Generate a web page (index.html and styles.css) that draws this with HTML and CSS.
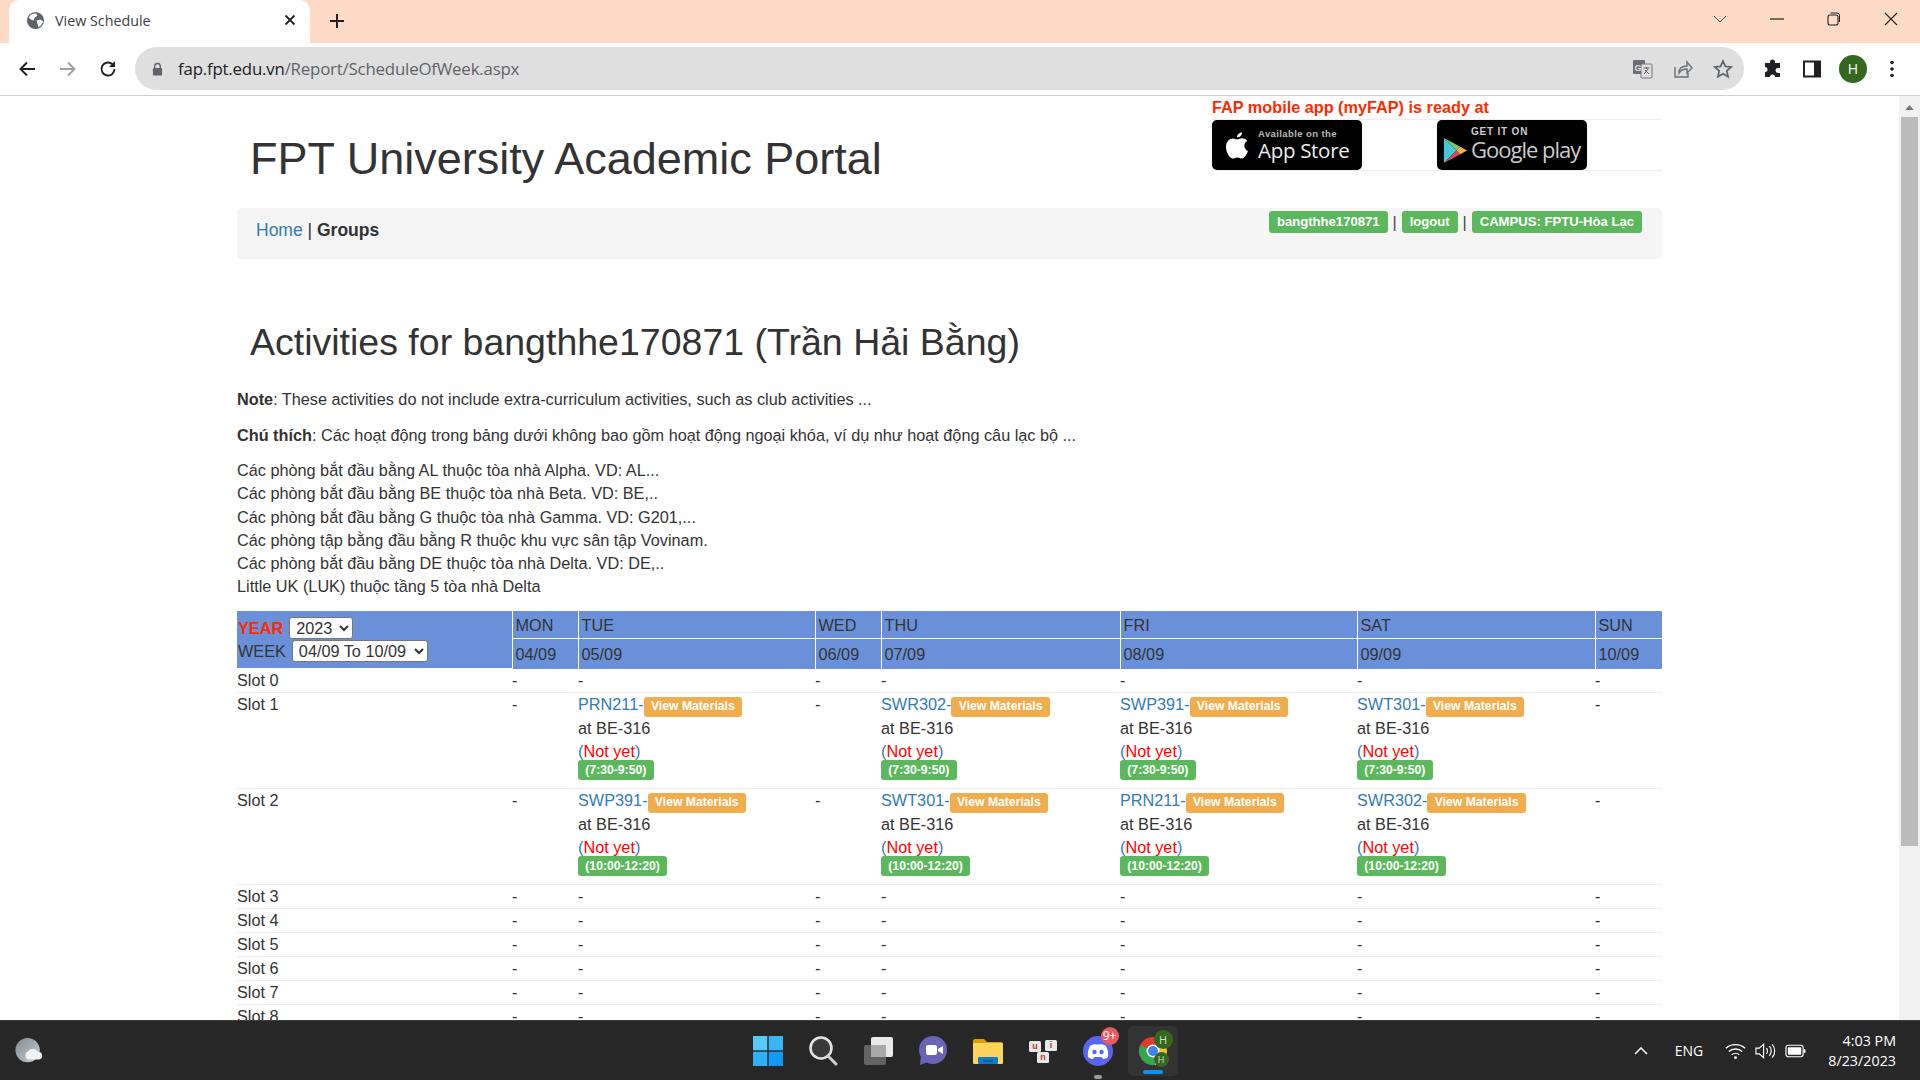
FILE: index.html
```html
<!DOCTYPE html>
<html lang="en">
<head>
    <meta charset="UTF-8">
    <meta name="viewport" content="width=device-width, initial-scale=1.0">
    <title>View Schedule</title>
    <link rel="stylesheet" href="styles.css">
</head>
<body>
    <!-- Browser tabs -->
    <div class="tabstrip">
        <div class="tab">
            <svg class="tab-favicon" viewBox="0 0 20 20"><circle cx="10" cy="10" r="9" fill="#5f6368"/><path d="M4 5c2-2 5-3 7-2l1 2-3 2-1 3-3-1-2-2zM11 10l4-1 3 2-2 4-3 2-1-4z" fill="#fff"/></svg>
            <span class="tab-title">View Schedule</span>
            <svg class="tab-close" viewBox="0 0 12 12"><path d="M1.5 1.5l9 9M10.5 1.5l-9 9" stroke="#202124" stroke-width="1.8"/></svg>
        </div>
        <svg class="tab-new" viewBox="0 0 16 16"><path d="M8 1v14M1 8h14" stroke="#202124" stroke-width="2"/></svg>
        <div class="window-buttons">
            <svg viewBox="0 0 14 14"><path d="M1 4l6 6 6-6" fill="none" stroke="#444" stroke-width="1"/></svg>
            <svg viewBox="0 0 14 14"><path d="M0 7h14" stroke="#222" stroke-width="1.2"/></svg>
            <svg viewBox="0 0 14 14"><rect x="1" y="3" width="10" height="10" rx="2" fill="none" stroke="#222" stroke-width="1.1"/><path d="M3.500 1h6.500a2.500 2.500 0 0 1 2.500 2.500v6.500" fill="none" stroke="#222" stroke-width="1"/></svg>
            <svg viewBox="0 0 14 14"><path d="M1 1l12 12M13 1l-12 12" stroke="#222" stroke-width="1.1"/></svg>
        </div>
    </div>

    <!-- Browser toolbar -->
    <div class="toolbar">
        <div class="nav-buttons">
            <svg viewBox="0 0 18 18"><path d="M17 9H3M9 2.500L2.500 9 9 15.500" fill="none" stroke="#202124" stroke-width="1.9"/></svg>
            <svg viewBox="0 0 18 18"><path d="M1 9h14M9 2.500L15.500 9 9 15.500" fill="none" stroke="#9aa0a6" stroke-width="1.9"/></svg>
            <svg viewBox="0 0 18 18"><path d="M15.500 9a6.500 6.500 0 1 1-2-4.700" fill="none" stroke="#202124" stroke-width="1.9"/><path d="M16 1v6h-6z" fill="#202124"/></svg>
        </div>
        <div class="omnibox">
            <svg class="lock" viewBox="0 0 12 14"><path d="M3 6V4a3 3 0 0 1 6 0v2" fill="none" stroke="#5f6368" stroke-width="1.500"/><rect x="1" y="6" width="10" height="8" rx="1" fill="#5f6368"/></svg>
            <span class="url"><span class="url-host">fap.fpt.edu.vn</span>/Report/ScheduleOfWeek.aspx</span>
            <div class="omni-icons">
                <svg viewBox="0 0 20 20"><rect x="0" y="1" width="12" height="14" rx="1" fill="#6b6f73"/><rect x="8" y="5" width="11" height="14" rx="1" fill="#dfdfdf" stroke="#777"/><text x="5" y="11.500" class="translate-g">G</text><path d="M10.500 9h6M13.500 8v2M11 15l4-5M12 11l4 4" stroke="#666" fill="none"/></svg>
                <svg viewBox="0 0 20 20"><path d="M2 8v10h13v-4" fill="none" stroke="#6b6f73" stroke-width="1.400"/><path d="M6 14c0-5 3-7 8-7V3l5 6-5 5v-4c-3 0-6 1-8 4z" fill="none" stroke="#6b6f73" stroke-width="1.400"/></svg>
                <svg viewBox="0 0 20 20"><path d="M10 2l2.400 5.400 5.800.6-4.400 3.900 1.300 5.800L10 14.700l-5.100 3 1.300-5.800L1.800 8l5.800-.6z" fill="none" stroke="#5f6368" stroke-width="1.700"/></svg>
            </div>
        </div>
        <div class="toolbar-icons">
            <svg viewBox="0 0 20 20"><path d="M7 3a2.500 2.500 0 0 1 5 0v1h5v5h-2a2.500 2.500 0 0 0 0 5h2v4h-5a2.500 2.500 0 0 0-5 0H2v-5a2.500 2.500 0 0 0 0-5V4h5z" fill="#202124"/></svg>
            <svg viewBox="0 0 20 20"><rect x="2" y="2.500" width="16" height="15" fill="none" stroke="#202124" stroke-width="2"/><rect x="12" y="2.500" width="6" height="15" fill="#202124"/></svg>
            <span class="avatar">H</span>
            <svg viewBox="0 0 20 20"><circle cx="10" cy="3.500" r="1.800" fill="#202124"/><circle cx="10" cy="10" r="1.800" fill="#202124"/><circle cx="10" cy="16.500" r="1.800" fill="#202124"/></svg>
        </div>
    </div>

    <div class="viewport">
        <div class="page">
            <div class="container">
                <div class="page-header">
                    <h1 class="portal-title">FPT University Academic Portal</h1>
                    <div class="mobile-apps">
                        <div class="mobile-title">FAP mobile app (myFAP) is ready at</div>
                        <div class="store-row">
                            <div class="store-badge">
                                <svg class="apple" viewBox="0 0 24 28"><path d="M17 1c.2 2-1.700 5-5 5-.2-2.500 2-5 5-5zM12 8c1.500 0 3-1.200 5.200-1.200 2 0 3.900 1 5 2.700-4.200 2.400-3.500 8.400.8 10-1.300 3.500-3.700 7.500-6 7.500-1.700 0-2.600-1.100-4.500-1.100s-3 1.100-4.500 1.100C4.500 27 1 20.500 1 15.500 1 10 4.500 7 7.800 7 9.500 7 11 8 12 8z" fill="#fff"/></svg>
                                <div class="store-text app-text">
                                    <span class="store-small">Available on the</span>
                                    <span class="store-big">App Store</span>
                                </div>
                            </div>
                            <div class="store-badge play-badge">
                                <svg class="play" viewBox="0 0 26 28"><path d="M1 1l13 13L1 27z" fill="#45c8d8"/><path d="M1 1l17 9-4 4z" fill="#7cc576"/><path d="M1 27l17-9-4-4z" fill="#d8476b"/><path d="M18 10l7 4-7 4-4-4z" fill="#f7b53c"/></svg>
                                <div class="store-text">
                                    <span class="store-get">GET IT ON</span>
                                    <span class="store-google">Google play</span>
                                </div>
                            </div>
                        </div>
                    </div>
                </div>

                <div class="nav-well">
                    <div class="crumbs"><a href="#">Home</a> | <b>Groups</b></div>
                    <div class="user-info">
                        <span class="label label-green">bangthhe170871</span>
                        <span class="user-sep">|</span>
                        <span class="label label-green">logout</span>
                        <span class="user-sep">|</span>
                        <span class="label label-green">CAMPUS: FPTU-Hòa Lạc</span>
                    </div>
                </div>

                <h2 class="activities-title">Activities for bangthhe170871 (Trần Hải Bằng)</h2>

                <p class="note"><b>Note</b>: These activities do not include extra-curriculum activities, such as club activities ...</p>
                <p class="note"><b>Chú thích</b>: Các hoạt động trong bảng dưới không bao gồm hoạt động ngoại khóa, ví dụ như hoạt động câu lạc bộ ...</p>
                <div class="rooms">
                    Các phòng bắt đầu bằng AL thuộc tòa nhà Alpha. VD: AL...<br>
                    Các phòng bắt đầu bằng BE thuộc tòa nhà Beta. VD: BE,..<br>
                    Các phòng bắt đầu bằng G thuộc tòa nhà Gamma. VD: G201,...<br>
                    Các phòng tập bằng đầu bằng R thuộc khu vực sân tập Vovinam.<br>
                    Các phòng bắt đầu bằng DE thuộc tòa nhà Delta. VD: DE,..<br>
                    Little UK (LUK) thuộc tầng 5 tòa nhà Delta
                </div>

                <table class="schedule">
                    <colgroup>
                        <col class="col-slot"><col class="col-mon"><col class="col-tue"><col class="col-wed"><col class="col-thu"><col class="col-fri"><col class="col-sat"><col class="col-sun">
                    </colgroup>
                    <thead>
                        <tr class="head-days">
                            <th rowspan="2" class="head-picker">
                                <div class="picker-row">
                                    <span class="year-label">YEAR</span>
                                    <select class="year-select"><option>2023</option></select>
                                </div>
                                <div class="picker-row">
                                    <span>WEEK</span>
                                    <select class="week-select"><option>04/09 To 10/09</option></select>
                                </div>
                            </th>
                            <th>MON</th><th>TUE</th><th>WED</th><th>THU</th><th>FRI</th><th>SAT</th><th>SUN</th>
                        </tr>
                        <tr class="head-dates">
                            <th>04/09</th><th>05/09</th><th>06/09</th><th>07/09</th><th>08/09</th><th>09/09</th><th>10/09</th>
                        </tr>
                    </thead>
                    <tbody>
                        <tr><td>Slot 0</td><td>-</td><td>-</td><td>-</td><td>-</td><td>-</td><td>-</td><td>-</td></tr>
                        <tr>
                            <td>Slot 1</td><td>-</td>
                            <td><div class="activity"><div><a href="#">PRN211-</a><span class="label label-orange">View Materials</span></div><div>at BE-316</div><div class="status"><a href="#">(<span class="not-yet">Not yet</span>)</a></div><span class="label label-green">(7:30-9:50)</span></div></td>
                            <td>-</td>
                            <td><div class="activity"><div><a href="#">SWR302-</a><span class="label label-orange">View Materials</span></div><div>at BE-316</div><div class="status"><a href="#">(<span class="not-yet">Not yet</span>)</a></div><span class="label label-green">(7:30-9:50)</span></div></td>
                            <td><div class="activity"><div><a href="#">SWP391-</a><span class="label label-orange">View Materials</span></div><div>at BE-316</div><div class="status"><a href="#">(<span class="not-yet">Not yet</span>)</a></div><span class="label label-green">(7:30-9:50)</span></div></td>
                            <td><div class="activity"><div><a href="#">SWT301-</a><span class="label label-orange">View Materials</span></div><div>at BE-316</div><div class="status"><a href="#">(<span class="not-yet">Not yet</span>)</a></div><span class="label label-green">(7:30-9:50)</span></div></td>
                            <td>-</td>
                        </tr>
                        <tr>
                            <td>Slot 2</td><td>-</td>
                            <td><div class="activity"><div><a href="#">SWP391-</a><span class="label label-orange">View Materials</span></div><div>at BE-316</div><div class="status"><a href="#">(<span class="not-yet">Not yet</span>)</a></div><span class="label label-green">(10:00-12:20)</span></div></td>
                            <td>-</td>
                            <td><div class="activity"><div><a href="#">SWT301-</a><span class="label label-orange">View Materials</span></div><div>at BE-316</div><div class="status"><a href="#">(<span class="not-yet">Not yet</span>)</a></div><span class="label label-green">(10:00-12:20)</span></div></td>
                            <td><div class="activity"><div><a href="#">PRN211-</a><span class="label label-orange">View Materials</span></div><div>at BE-316</div><div class="status"><a href="#">(<span class="not-yet">Not yet</span>)</a></div><span class="label label-green">(10:00-12:20)</span></div></td>
                            <td><div class="activity"><div><a href="#">SWR302-</a><span class="label label-orange">View Materials</span></div><div>at BE-316</div><div class="status"><a href="#">(<span class="not-yet">Not yet</span>)</a></div><span class="label label-green">(10:00-12:20)</span></div></td>
                            <td>-</td>
                        </tr>
                        <tr><td>Slot 3</td><td>-</td><td>-</td><td>-</td><td>-</td><td>-</td><td>-</td><td>-</td></tr>
                        <tr><td>Slot 4</td><td>-</td><td>-</td><td>-</td><td>-</td><td>-</td><td>-</td><td>-</td></tr>
                        <tr><td>Slot 5</td><td>-</td><td>-</td><td>-</td><td>-</td><td>-</td><td>-</td><td>-</td></tr>
                        <tr><td>Slot 6</td><td>-</td><td>-</td><td>-</td><td>-</td><td>-</td><td>-</td><td>-</td></tr>
                        <tr><td>Slot 7</td><td>-</td><td>-</td><td>-</td><td>-</td><td>-</td><td>-</td><td>-</td></tr>
                        <tr><td>Slot 8</td><td>-</td><td>-</td><td>-</td><td>-</td><td>-</td><td>-</td><td>-</td></tr>
                    </tbody>
                </table>
            </div>
        </div>
        <div class="scrollbar">
            <svg class="scroll-up" viewBox="0 0 10 6"><path d="M5 0l5 6H0z" fill="#777"/></svg>
            <div class="scroll-thumb"></div>
        </div>
    </div>

    <!-- Windows taskbar -->
    <div class="taskbar">
        <div class="task-left">
            <svg class="weather" viewBox="0 0 30 32"><defs><linearGradient id="moon" x1="0" y1="0" x2="1" y2="1"><stop offset="0" stop-color="#7f8a94"/><stop offset="1" stop-color="#c9ced2"/></linearGradient></defs><circle cx="13" cy="15" r="13" fill="url(#moon)"/><path d="M13 25a5 5 0 0 1 1-9 6 6 0 0 1 10 1 4 4 0 0 1 1 8z" fill="#f1f2f3"/></svg>
        </div>
        <div class="task-apps">
            <svg class="task-icon" viewBox="0 0 30 30"><rect x="0" y="0" width="14.300" height="14.300" fill="#58c8f5"/><rect x="15.700" y="0" width="14.300" height="14.300" fill="#3cb4f3"/><rect x="0" y="15.700" width="14.300" height="14.300" fill="#2fb0f2"/><rect x="15.700" y="15.700" width="14.300" height="14.300" fill="#139af0"/></svg>
            <svg class="task-icon" viewBox="0 0 30 30"><circle cx="13" cy="12" r="10.500" fill="#3a3a3a" stroke="#e4e4e4" stroke-width="2.600"/><path d="M20 20l8 8" stroke="#d0d0d0" stroke-width="3" stroke-linecap="round"/></svg>
            <svg class="task-icon" viewBox="0 0 30 30"><rect x="1" y="9" width="22" height="20" rx="2" fill="#636363"/><rect x="8" y="1" width="22" height="20" rx="2" fill="#e9e9e9"/><rect x="8" y="9" width="15" height="12" fill="#a9a9a9"/></svg>
            <svg class="task-icon" viewBox="0 0 30 30"><circle cx="15" cy="14" r="14" fill="#6a63b8"/><path d="M3 20l-1 9 8-3z" fill="#6a63b8"/><rect x="8" y="9" width="11" height="10" rx="2" fill="#fff"/><path d="M20 13l5-3v8l-5-3z" fill="#fff"/></svg>
            <svg class="task-icon" viewBox="0 0 30 30"><path d="M0 5a2 2 0 0 1 2-2h9l3 3h14a2 2 0 0 1 2 2v4H0z" fill="#d9a000"/><rect x="0" y="7" width="30" height="21" rx="1" fill="#fcd35c"/><rect x="5" y="21" width="20" height="7" rx="1" fill="#0e78c9"/><path d="M10 25h10" stroke="#064f8a" stroke-width="1.200"/></svg>
            <svg class="task-icon" viewBox="0 0 30 30"><rect x="1" y="5" width="12" height="11" rx="1.500" fill="#e8e8e8"/><rect x="17" y="4" width="12" height="11" rx="1.500" fill="#e8e8e8"/><rect x="9" y="16" width="12" height="11" rx="1.500" fill="#e8e8e8"/><text x="7" y="13" class="key-text">u</text><text x="23" y="12" class="key-text">i</text><text x="15" y="24" class="key-text">n</text></svg>
            <div class="discord">
                <svg class="task-icon" viewBox="0 0 30 30"><circle cx="15" cy="15" r="15" fill="#5865f2"/><path d="M7 10c3-2 5-2 6-1.500h4c1-.5 3-.5 6 1.500 2 4 2.500 7 2 11-2 1.500-3.500 2-5 2l-1.500-2h-7L10 23c-1.500 0-3-.5-5-2-.5-4 0-7 2-11z" fill="#fff"/><circle cx="11.500" cy="16" r="2.200" fill="#5865f2"/><circle cx="18.500" cy="16" r="2.200" fill="#5865f2"/></svg>
                <span class="discord-badge">9+</span>
                <span class="running-dot"></span>
            </div>
            <div class="chrome-active">
                <svg class="task-icon" viewBox="0 0 30 30"><circle cx="15" cy="15" r="14" fill="#e33b2e"/><path d="M15 15L27 8a14 14 0 0 1-10 21z" fill="#f9c21a"/><path d="M15 15l2 14A14 14 0 0 1 2.500 9z" fill="#2fa84f"/><circle cx="15" cy="15" r="6.500" fill="#fff"/><circle cx="15" cy="15" r="5" fill="#3f84ee"/></svg>
                <span class="chrome-h chrome-h-big">H</span>
                <span class="chrome-h chrome-h-small">H</span>
                <span class="running-bar"></span>
            </div>
        </div>
        <div class="task-tray">
            <svg class="tray-chevron" viewBox="0 0 14 8"><path d="M1 7l6-6 6 6" fill="none" stroke="#fff" stroke-width="1.600"/></svg>
            <span class="tray-lang">ENG</span>
            <svg class="tray-icon" viewBox="0 0 22 18"><path d="M1 6c5.500-5 14.500-5 20 0M4 9.500c4-3.500 10-3.500 14 0M7 13c2.300-2 5.700-2 8 0" fill="none" stroke="#fff" stroke-width="1.400"/><circle cx="11" cy="16" r="1.500" fill="#fff"/></svg>
            <svg class="tray-icon" viewBox="0 0 22 18"><path d="M1 6h3.500L9 2v14l-4.500-4H1z" fill="none" stroke="#fff" stroke-width="1.200"/><path d="M12 6c1.500 2 1.500 4 0 6M15 4c2.500 3 2.500 7 0 10M18 2c3.500 4 3.500 10 0 14" fill="none" stroke="#fff" stroke-width="1.200"/></svg>
            <svg class="tray-icon" viewBox="0 0 22 18"><rect x="1" y="3" width="18" height="12" rx="2.500" fill="none" stroke="#fff" stroke-width="1.200"/><rect x="3" y="5" width="14" height="8" rx="1" fill="#fff"/><rect x="19.500" y="7" width="2" height="4" rx="1" fill="#fff"/></svg>
            <div class="tray-clock"><span>4:03 PM</span><span>8/23/2023</span></div>
        </div>
    </div>
</body>
</html>
```

FILE: styles.css
```css
* {
    box-sizing: border-box;
}
html, body {
    margin: 0;
    height: 100%;
    overflow: hidden;
}
body {
    display: flex;
    flex-direction: column;
    height: 1080px;
    font-family: "Liberation Sans", Arial, sans-serif;
    font-size: 16.25px;
    color: #333;
    background: #fff;
}
a {
    color: #337ab7;
    text-decoration: none;
}

/* browser tabs */
.tabstrip {
    height: 43px;
    flex: none;
    display: flex;
    align-items: flex-end;
    padding-left: 9px;
    background: #fcdac6;
    position: relative;
}
.tab {
    width: 301px;
    height: 43px;
    background: #fff;
    border-radius: 10px 10px 0 0;
    display: flex;
    align-items: center;
    padding: 0 0 3px 17px;
}
.tab-favicon {
    width: 19px;
    height: 19px;
}
.tab-title {
    margin-left: 10px;
    font-family: "Open Sans", sans-serif;
    font-size: 14.3px;
    color: #3c4043;
    flex: 1;
}
.tab-close {
    width: 12px;
    height: 12px;
    margin-right: 14px;
}
.tab-new {
    width: 16px;
    height: 16px;
    margin: 0 0 14px 19px;
}
.window-buttons {
    margin-left: auto;
    align-self: stretch;
    display: flex;
    align-items: center;
    gap: 43px;
    padding: 0 22px 6px 0;
}
.window-buttons svg {
    width: 14px;
    height: 14px;
}

/* browser toolbar */
.toolbar {
    height: 53px;
    flex: none;
    display: flex;
    align-items: center;
    background: #fff;
    border-bottom: 1px solid #cfcfcf;
    padding-bottom: 1px;
}
.nav-buttons {
    display: flex;
    gap: 22.5px;
    padding-left: 18px;
    width: 135px;
}
.nav-buttons svg {
    width: 18px;
    height: 18px;
}
.omnibox {
    width: 1609px;
    height: 43px;
    border-radius: 22px;
    background: #dfdfdf;
    display: flex;
    align-items: center;
    padding: 0 11px 0 17px;
}
.lock {
    width: 11px;
    height: 14px;
}
.url {
    margin-left: 15px;
    font-family: "Open Sans", sans-serif;
    font-size: 16.85px;
    letter-spacing: -0.2px;
    color: #5f6368;
}
.url-host {
    color: #202124;
}
.omni-icons {
    margin-left: auto;
    display: flex;
    gap: 20px;
}
.omni-icons svg {
    width: 20px;
    height: 20px;
}
.translate-g {
    font-family: "Liberation Sans", sans-serif;
    font-size: 9px;
    font-weight: 700;
    fill: #e4e4e4;
    text-anchor: middle;
}
.toolbar-icons {
    display: flex;
    align-items: center;
    gap: 19px;
    padding-left: 19px;
}
.toolbar-icons svg {
    width: 20px;
    height: 20px;
}
.avatar {
    width: 28px;
    height: 28px;
    border-radius: 50%;
    background: #33691e;
    color: #fff;
    font-family: "Open Sans", sans-serif;
    font-size: 14px;
    text-align: center;
    line-height: 28px;
    margin: 0 0 0 -2px;
}
.toolbar-icons .avatar + svg {
    margin-left: -4px;
}

/* page area */
.viewport {
    flex: 1;
    min-height: 0;
    display: flex;
}
.page {
    flex: 1;
    min-width: 0;
    overflow: hidden;
}
.container {
    width: 1425px;
    margin-left: 237px;
}
.scrollbar {
    width: 21px;
    padding-right: 2px;
    background: #f1f1f1;
    display: flex;
    flex-direction: column;
    align-items: flex-end;
}
.scroll-up {
    width: 9px;
    height: 5px;
    margin: 9px 4px 7px;
}
.scroll-thumb {
    width: 17px;
    height: 729px;
    background: #bbb;
}

/* header */
.page-header {
    height: 112px;
    display: flex;
    justify-content: space-between;
}
.portal-title {
    margin: 36px 0 0 13px;
    font-size: 45px;
    font-weight: 400;
    line-height: 54px;
    color: #333;
}
.mobile-apps {
    width: 450px;
}
.mobile-title {
    color: #ff2a00;
    font-weight: 700;
    font-size: 16.25px;
    line-height: 23px;
    border-bottom: 1px solid #eee;
}
.store-row {
    display: flex;
    gap: 75px;
    height: 51px;
    border-bottom: 1px solid #eee;
}
.store-badge {
    width: 150px;
    height: 50px;
    background: #000;
    border-radius: 5px;
    display: flex;
    align-items: center;
    padding-left: 13px;
    color: #eee;
}
.apple {
    width: 24px;
    height: 29px;
    margin-right: 9px;
}
.store-text {
    display: flex;
    flex-direction: column;
}
.app-text {
    margin-bottom: 3px;
}
.store-small {
    font-size: 9.500px;
    font-weight: 700;
    letter-spacing: 0.4px;
    line-height: 12px;
    color: #bbb;
}
.store-big {
    font-family: "Open Sans", sans-serif;
    font-size: 20.500px;
    line-height: 20px;
    letter-spacing: -0.3px;
}
.play-badge {
    padding-left: 6px;
}
.play {
    width: 25px;
    height: 27px;
    margin: 10px 3px 0 0;
}
.store-get {
    font-size: 10px;
    font-weight: 700;
    letter-spacing: 0.8px;
    line-height: 10px;
    margin-top: 1px;
    color: #ccc;
}
.store-google {
    font-family: "Open Sans", sans-serif;
    font-size: 22px;
    line-height: 24px;
    margin-bottom: 4px;
    letter-spacing: -1px;
    color: #ccc;
}

/* nav well */
.nav-well {
    height: 51px;
    background: #f5f5f5;
    border-radius: 5px;
    display: flex;
    justify-content: space-between;
    padding: 0 20px 0 19px;
}
.crumbs {
    padding-top: 10px;
    font-size: 17.5px;
    line-height: 24px;
}
.user-info {
    display: flex;
    align-items: flex-start;
    gap: 5px;
    padding-top: 3px;
    line-height: 22px;
}
.user-sep {
    color: #444;
}
.label {
    display: inline-block;
    padding: 3.500px 7.300px 4.300px;
    font-size: 12.200px;
    font-weight: 700;
    line-height: 1;
    color: #fff;
    border-radius: 3.300px;
    white-space: nowrap;
}
.label-green {
    background: #5cb85c;
}
.label-orange {
    background: #f0ad4e;
}
.user-info .label {
    padding: 4px 7.900px 5px;
    font-size: 13.125px;
}

/* heading and notes */
.activities-title {
    margin: 61px 0 22px 13px;
    font-size: 37.500px;
    font-weight: 400;
    line-height: 45px;
    color: #333;
}
.note {
    margin: 0 0 11px;
    line-height: 25px;
}
.rooms {
    line-height: 23.300px;
    margin-bottom: 12px;
}

/* schedule table */
.schedule {
    width: 1425px;
    table-layout: fixed;
    border-collapse: collapse;
    border-spacing: 0;
}
.col-slot { width: 275px; }
.col-mon { width: 66px; }
.col-tue { width: 237px; }
.col-wed { width: 66px; }
.col-thu { width: 239px; }
.col-fri { width: 237px; }
.col-sat { width: 238px; }
.col-sun { width: 67px; }
.schedule th {
    background: #6b90da;
    border: 1px solid #fff;
    border-top: 0;
    padding: 0 3px;
    text-align: left;
    font-weight: 400;
    color: #333;
}
.head-days th {
    height: 28px;
    padding-top: 1px;
}
.head-dates th {
    height: 30px;
    border-bottom: 0;
}
.schedule th.head-picker {
    padding: 0 0 0 1px;
    border-left: 0;
}
.picker-row {
    display: flex;
    align-items: center;
    gap: 6px;
    height: 23px;
}
.year-label {
    color: #ff2a00;
    font-weight: 700;
}
.year-select,
.week-select {
    font-family: "Liberation Sans", Arial, sans-serif;
    font-size: 16.250px;
    height: 22px;
    padding: 0 2px;
    background: #fff;
    color: #333;
    border: 1px solid #767676;
    border-radius: 3px;
}
.year-select {
    width: 64px;
}
.week-select {
    width: 136px;
}
.schedule td {
    padding: 0;
    height: 24px;
    line-height: 23px;
    vertical-align: top;
    border-bottom: 1px solid #eee;
}
.activity {
    line-height: 23.500px;
    height: 95px;
}
.activity > .label {
    display: block;
    width: fit-content;
}
.status {
    height: 20px;
}
.not-yet {
    color: #f00;
}

/* taskbar */
.taskbar {
    height: 60px;
    flex: none;
    display: grid;
    grid-template-columns: 1fr auto 1fr;
    align-items: center;
    background: #272727;
    border-top: 1px solid #3c3c3c;
    color: #fff;
    position: relative;
    z-index: 1;
}
.task-left {
    padding-left: 15px;
}
.weather {
    width: 29px;
    height: 30px;
    display: block;
}
.task-apps {
    display: flex;
    align-items: center;
    gap: 25px;
}
.task-icon {
    width: 30px;
    height: 30px;
    display: block;
}
.key-text {
    font-family: "Liberation Sans", sans-serif;
    font-size: 9px;
    font-weight: 700;
    fill: #c0392b;
    text-anchor: middle;
}
.discord {
    position: relative;
}
.discord-badge {
    position: absolute;
    top: -9px;
    right: -6px;
    width: 18px;
    height: 18px;
    border-radius: 50%;
    background: #ea5a5f;
    font-family: "Open Sans", sans-serif;
    font-size: 12px;
    line-height: 18px;
    text-align: center;
}
.running-dot {
    position: absolute;
    left: 11px;
    bottom: -13px;
    width: 8px;
    height: 4px;
    border-radius: 2px;
    background: #9a9a9a;
}
.chrome-active {
    position: relative;
    width: 50px;
    height: 50px;
    margin-left: -10px;
    margin-right: -10px;
    display: flex;
    align-items: center;
    justify-content: center;
    background: #333;
    border-radius: 5px;
}
.chrome-h {
    position: absolute;
    border-radius: 50%;
    background: #33691e;
    font-family: "Open Sans", sans-serif;
    text-align: center;
    color: #ddd;
}
.chrome-h-big {
    top: 4px;
    right: 5px;
    width: 19px;
    height: 19px;
    font-size: 11px;
    line-height: 19px;
}
.chrome-h-small {
    top: 26px;
    right: 9px;
    width: 15px;
    height: 15px;
    font-size: 9px;
    line-height: 15px;
}
.running-bar {
    position: absolute;
    left: 15px;
    bottom: 2px;
    width: 20px;
    height: 4px;
    border-radius: 2px;
    background: #0a94f5;
}
.task-tray {
    display: flex;
    align-items: center;
    justify-content: flex-end;
    padding-right: 24px;
}
.tray-chevron {
    width: 14px;
    height: 8px;
}
.tray-lang {
    font-family: "Open Sans", sans-serif;
    font-size: 14px;
    margin: 0 22px 0 27px;
}
.tray-icon {
    width: 21px;
    height: 18px;
    margin-right: 9px;
}
.tray-clock {
    display: flex;
    flex-direction: column;
    align-items: flex-end;
    margin-left: 13px;
    font-family: "Open Sans", sans-serif;
    font-size: 14.3px;
    line-height: 20px;
}
```
